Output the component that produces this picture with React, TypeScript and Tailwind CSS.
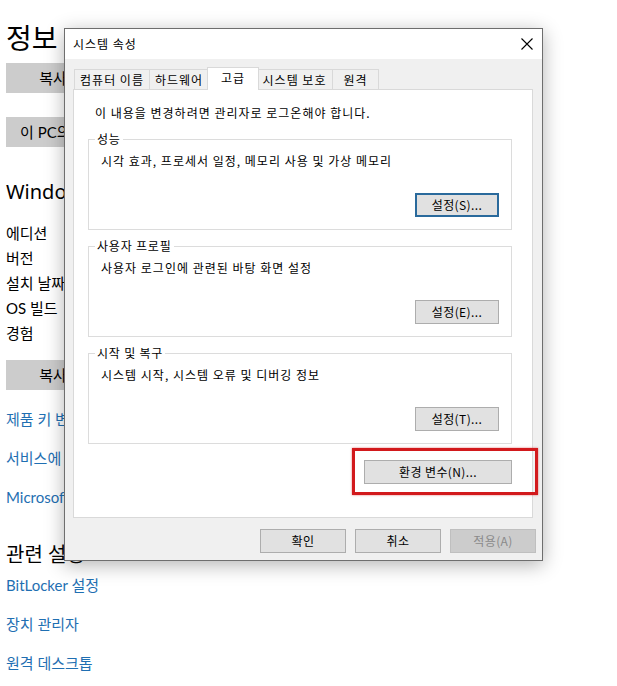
const winBtn =
  'h-[24px] bg-[#e1e1e1] border border-[#adadad] text-[12px] tracking-[0.4px] text-black flex items-center justify-center'

const GroupBox = ({ label, text, button, focused }: { label: string; text: string; button: string; focused?: boolean }) => {
  return (
    <div className="relative w-[424px] h-[91px] border border-[#dcdcdc] flex flex-col px-[12px] pt-[13px]">
      <span className="absolute -top-[9px] left-[6px] bg-white px-[2px] text-[12px] leading-[16px] tracking-[0.8px]">{label}</span>
      <p className="text-[12px] leading-[16px] tracking-[1px]">{text}</p>
      <button
        className={
          focused
            ? 'self-end mt-[24px] w-[84px] h-[24px] bg-[#e1e1e1] border-2 border-[#2a6a9c] text-[12px] tracking-[0.4px] flex items-center justify-center'
            : 'self-end mt-[24px] w-[84px] ' + winBtn
        }
      >
        {button}
      </button>
    </div>
  )
}

const Tab = ({ label, width, active, first }: { label: string; width: string; active?: boolean; first?: boolean }) => {
  if (active) {
    return (
      <div className="relative z-10 -mx-[2px] -mb-px h-[23px] w-[52px] bg-white border-t border-l border-r border-[#d9d9d9] flex items-center justify-center pb-[3px] text-[12px] tracking-[1px]">
        {label}
      </div>
    )
  }
  return (
    <div
      className={
        (first ? 'border-l ' : '') +
        width +
        ' h-[20px] bg-[#f0f0f0] border-t border-r border-[#d9d9d9] flex items-center justify-center text-[12px] tracking-[1px]'
      }
    >
      {label}
    </div>
  )
}

const SystemDialog = () => {
  return (
    <div className="absolute left-[64px] top-[28px] w-[479px] h-[533px] border border-[#6e6e6e] bg-[#f0f0f0] shadow-[0_4px_18px_rgba(0,0,0,0.3)] flex flex-col font-['Noto_Sans_CJK_KR','Noto_Sans',sans-serif] text-black">
      <div className="h-[30px] bg-white flex items-center justify-between pl-[8px] pr-[9px]">
        <span className="text-[12px] tracking-[1px]">시스템 속성</span>
        <svg width="12" height="12" viewBox="0 0 12 12" className="text-black">
          <path d="M0.5 0.5 L11.5 11.5 M11.5 0.5 L0.5 11.5" stroke="currentColor" strokeWidth="1.1" fill="none" />
        </svg>
      </div>

      <div className="flex items-end mt-[8px] ml-[9px] h-[22px]">
        <Tab label="컴퓨터 이름" width="w-[76px]" first />
        <Tab label="하드웨어" width="w-[59px]" />
        <Tab label="고급" width="w-[48px]" active />
        <Tab label="시스템 보호" width="w-[76px]" />
        <Tab label="원격" width="w-[46px]" />
      </div>

      <div className="ml-[8px] w-[460px] h-[429px] bg-white border border-[#d9d9d9] flex flex-col">
        <p className="pl-[21px] pt-[15px] text-[12px] leading-[16px] tracking-[1px]">이 내용을 변경하려면 관리자로 로그온해야 합니다.</p>
        <div className="ml-[14px] mt-[18px] flex flex-col gap-[16px]">
          <GroupBox label="성능" text="시각 효과, 프로세서 일정, 메모리 사용 및 가상 메모리" button="설정(S)..." focused />
          <GroupBox label="사용자 프로필" text="사용자 로그인에 관련된 바탕 화면 설정" button="설정(E)..." />
          <GroupBox label="시작 및 복구" text="시스템 시작, 시스템 오류 및 디버깅 정보" button="설정(T)..." />
          <div className="w-[424px] flex justify-end">
            <button className={'w-[148px] ' + winBtn}>환경 변수(N)...</button>
          </div>
        </div>
      </div>

      <div className="flex justify-end gap-[9px] mt-[11px] pr-[6px]">
        <button className={'w-[86px] ' + winBtn}>확인</button>
        <button className={'w-[86px] ' + winBtn}>취소</button>
        <button className="w-[86px] h-[24px] bg-[#cccccc] border border-[#bfbfbf] text-[12px] tracking-[0.4px] text-[#8a8a8a] flex items-center justify-center">
          적용(A)
        </button>
      </div>

      <div className="absolute left-[287px] top-[419px] w-[186px] h-[47px] border-[3px] border-[#d2191c] shadow-[0_0_2px_rgba(210,25,28,0.6)]" />
    </div>
  )
}

export default function App() {
  const link = 'text-[15px] leading-[20px] text-[#1f6fb2] whitespace-nowrap'
  return (
    <div className="relative w-full h-[686px] bg-white overflow-hidden font-['Lato','Noto_Sans_CJK_KR',sans-serif] text-black">
      <div className="flex flex-col items-start pl-[6px] pt-[20px]">
        <h1 className="text-[28px] leading-[36px]">정보</h1>
        <button className="mt-[7px] w-[94px] h-[30px] bg-[#cccccc] text-[15px]">복사</button>
        <button className="mt-[24px] h-[30px] bg-[#cccccc] text-[15px] px-[14px]">이 PC의 이름 바꾸기</button>
        <h2 className="mt-[31px] text-[20px] leading-[28px] font-['Noto_Sans','Noto_Sans_CJK_KR',sans-serif]">Windows 사양</h2>
        <ul className="mt-[15px] text-[15px] leading-[25px]">
          <li>에디션</li>
          <li>버전</li>
          <li>설치 날짜</li>
          <li>OS 빌드</li>
          <li>경험</li>
        </ul>
        <button className="mt-[14px] w-[94px] h-[30px] bg-[#cccccc] text-[15px]">복사</button>
        <a className={'mt-[19px] ' + link}>제품 키 변경 또는 Windows 버전 업그레이드</a>
        <a className={'mt-[19px] ' + link}>서비스에 적용되는 Microsoft 서비스 계약 읽기</a>
        <a className={'mt-[19px] ' + link}>Microsoft 소프트웨어 사용 조건 읽기</a>
        <h2 className="mt-[33px] text-[20px] leading-[28px]">관련 설정</h2>
        <a className={'mt-[7px] ' + link}>BitLocker 설정</a>
        <a className={'mt-[19px] ' + link}>장치 관리자</a>
        <a className={'mt-[19px] ' + link}>원격 데스크톱</a>
      </div>
      <SystemDialog />
    </div>
  )
}
